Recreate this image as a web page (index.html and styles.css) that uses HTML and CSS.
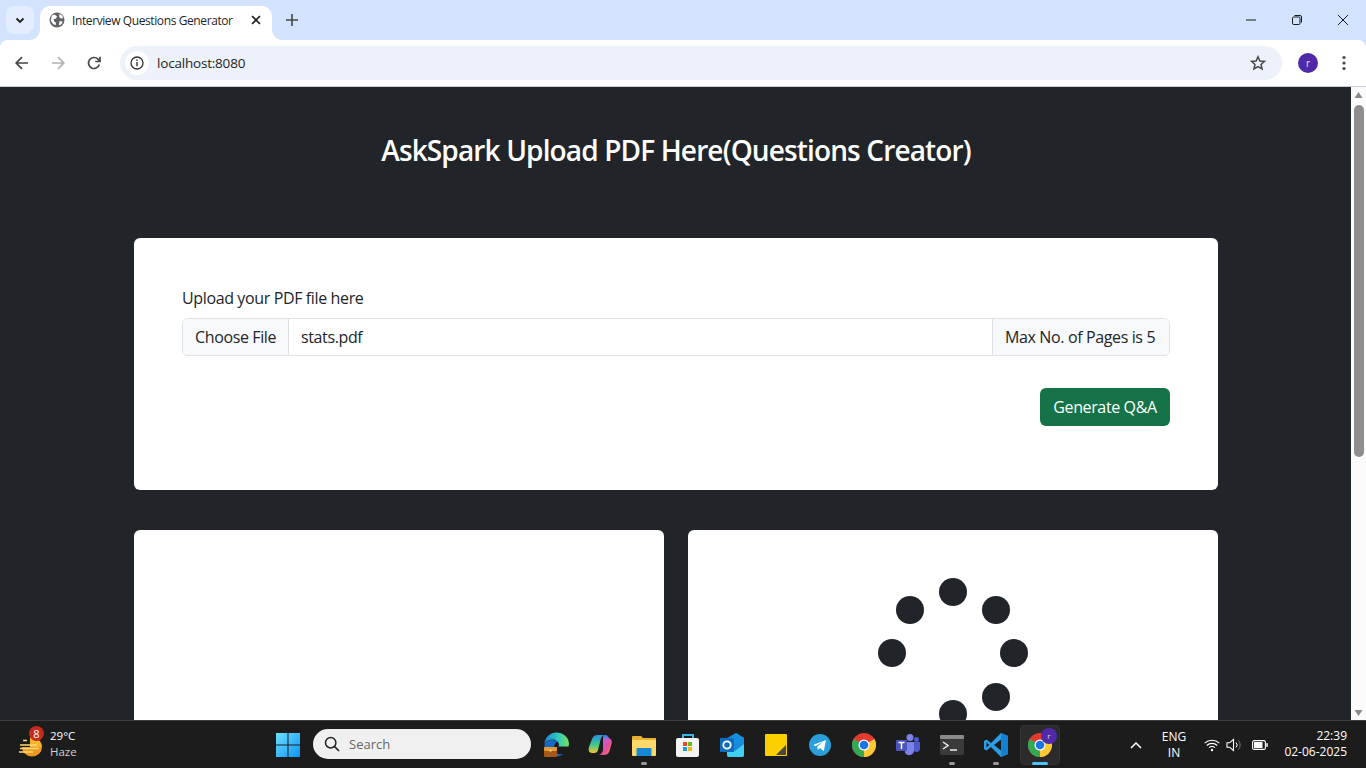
FILE: index.html
```html
<!DOCTYPE html>
<html lang="en">
<head>
<meta charset="utf-8">
<title>Interview Questions Generator</title>
<link rel="stylesheet" href="styles.css">
</head>
<body>
<div class="screen">
  <div class="window">
    <div class="tabstrip">
      <div class="tab-search"><svg width="12" height="12" viewBox="0 0 12 12"><path d="M2.500 4.500 6 8l3.500-3.500" fill="none" stroke="#1f1f1f" stroke-width="1.800"/></svg></div>
      <div class="tab">
        <svg class="tab-favicon" width="16" height="16" viewBox="0 0 16 16"><circle cx="8" cy="8" r="7.500" fill="#5f6368"/><path d="M2.800 3.400 5.500 2.600 8 4.300 7 6.500l-2.300.6.500 2.400 1.800 1.300-.4 2.500C4.300 12.500 2.200 10.500 1.800 8zM10.500 1.800l2.800 2 .9 2.500-2.300.3-1.700-1.700zM10.500 9.200l3.300.2-1.500 2.800-2.400 1.400z" fill="#fff"/></svg>
        <span class="tab-title">Interview Questions Generator</span>
        <svg class="tab-close" width="10" height="10" viewBox="0 0 10 10"><path d="M1 1l8 8M9 1l-8 8" stroke="#1f1f1f" stroke-width="1.700"/></svg>
      </div>
      <svg class="new-tab" width="12" height="12" viewBox="0 0 12 12"><path d="M6 0v12M0 6h12" stroke="#444" stroke-width="1.600"/></svg>
      <div class="win-controls">
        <svg width="10" height="10" viewBox="0 0 10 10"><path d="M0 5h10" stroke="#1a1a1a"/></svg>
        <svg width="10" height="10" viewBox="0 0 10 10"><rect x=".5" y="2" width="7.500" height="7.500" rx="1.200" fill="none" stroke="#1a1a1a"/><path d="M2.500 .5h5.500a1.500 1.500 0 0 1 1.500 1.500v5.500" fill="none" stroke="#1a1a1a"/></svg>
        <svg width="10" height="10" viewBox="0 0 10 10"><path d="M0 0l10 10M10 0L0 10" stroke="#1a1a1a"/></svg>
      </div>
    </div>
    <div class="toolbar">
      <svg class="nav" width="16" height="16" viewBox="0 0 16 16"><path d="M14 8H2.500M8 2.200 2.200 8 8 13.800" fill="none" stroke="#474747" stroke-width="1.700"/></svg>
      <svg class="nav" width="16" height="16" viewBox="0 0 16 16"><path d="M2 8h11.500M8 2.200 13.800 8 8 13.800" fill="none" stroke="#b0b1b3" stroke-width="1.700"/></svg>
      <svg class="nav" width="16" height="16" viewBox="0 0 16 16"><path d="M13.300 9.500A5.500 5.500 0 1 1 12 4.200L14 6.200M14 1.800v4.700H9.300" fill="none" stroke="#474747" stroke-width="1.700"/></svg>
      <div class="omnibox">
        <div class="site-info"><svg width="14" height="14" viewBox="0 0 14 14"><circle cx="7" cy="7" r="6" fill="none" stroke="#333" stroke-width="1.300"/><path d="M7 6v4.200M7 3.500v1.400" stroke="#333" stroke-width="1.400"/></svg></div>
        <span class="url">localhost:8080</span>
        <svg class="star" width="16" height="16" viewBox="0 0 16 16"><path d="M8 1.700l1.900 4.300 4.600.4-3.500 3 1.100 4.600L8 11.600 3.900 14l1.100-4.600-3.500-3 4.600-.4z" fill="none" stroke="#474747" stroke-width="1.500"/></svg>
      </div>
      <div class="avatar">r</div>
      <svg class="menu" width="4" height="16" viewBox="0 0 4 16"><circle cx="2" cy="2.500" r="1.600" fill="#474747"/><circle cx="2" cy="8" r="1.600" fill="#474747"/><circle cx="2" cy="13.500" r="1.600" fill="#474747"/></svg>
    </div>
    <div class="viewport">
      <main class="page">
        <h1 class="title">AskSpark Upload PDF Here(Questions Creator)</h1>
        <section class="card upload">
          <label class="label">Upload your PDF file here</label>
          <div class="input-group">
            <span class="file-btn">Choose File</span>
            <span class="file-name">stats.pdf</span>
            <span class="addon">Max No. of Pages is 5</span>
          </div>
          <div class="actions"><button class="btn">Generate Q&amp;A</button></div>
        </section>
        <div class="columns">
          <section class="card pane"></section>
          <section class="card pane spinner-pane">
            <svg class="spinner" width="150" height="150" viewBox="0 0 150 150" fill="#212529">
              <circle cx="75" cy="14" r="14"/><circle cx="118" cy="32" r="14"/><circle cx="136" cy="75" r="14"/><circle cx="118" cy="119" r="14"/><circle cx="75" cy="136" r="14"/><circle cx="14" cy="75" r="14"/><circle cx="32" cy="32" r="14"/>
            </svg>
          </section>
        </div>
      </main>
      <div class="scrollbar">
        <svg width="15" height="14" viewBox="0 0 15 14"><path d="M3.500 10l4-6 4 6z" fill="#8a8a8a"/></svg>
        <div class="thumb"></div>
        <div class="track"></div>
        <svg width="15" height="14" viewBox="0 0 15 14"><path d="M3.500 4l4 6 4-6z" fill="#8a8a8a"/></svg>
      </div>
    </div>
  </div>
  <footer class="taskbar">
    <div class="weather">
      <div class="weather-icon">
        <svg width="26" height="24" viewBox="0 0 26 24"><path d="M4 14h20a10 9.500 0 0 1-10 9.500A10 9.500 0 0 1 4 14z" fill="#ef9a1f"/><path d="M12 4.500a10 10 0 0 1 12 9.500H12z" fill="#f7b52c"/><path d="M5 7.500h4M2 12h17M2 15.500h19M1 19h14" stroke="#ffd977" stroke-width="1.700"/></svg>
        <span class="badge">8</span>
      </div>
      <div class="weather-text"><span class="temp">29°C</span><span class="haze">Haze</span></div>
    </div>
    <div class="apps">
      <div class="app"><svg width="24" height="24" viewBox="0 0 24 24"><defs><linearGradient id="win" x1="0" y1="0" x2="1" y2="1"><stop offset="0" stop-color="#6fe0fc"/><stop offset="1" stop-color="#0a94f5"/></linearGradient></defs><path d="M0 0h11.500v11.500H0zM12.500 0H24v11.500H12.500zM0 12.500h11.500V24H0zM12.500 12.500H24V24H12.500z" fill="url(#win)"/></svg></div>
      <div class="search"><svg width="16" height="16" viewBox="0 0 16 16"><circle cx="6.700" cy="6.700" r="5.200" fill="none" stroke="#222" stroke-width="1.500"/><path d="M10.500 10.500 15 15" stroke="#222" stroke-width="1.700"/></svg><span>Search</span></div>
      <div class="app first-pinned"><svg width="25" height="25" viewBox="0 0 25 25"><defs><linearGradient id="edgeTop" x1="0" y1="0" x2="1" y2="0"><stop offset="0" stop-color="#1a86d8"/><stop offset=".55" stop-color="#2ec9c0"/><stop offset="1" stop-color="#7be05a"/></linearGradient></defs><path d="M12.500.5A12 12 0 0 0 .5 12c2.500-4.500 8-5 10.500-4 4 1.500 4.500 5 3.500 6.500h10c.3-.8.500-2 .500-3A12 12 0 0 0 12.500.5z" fill="url(#edgeTop)"/><path d="M.5 12c-.4 7 5 12.500 11.500 12.500 3 0 5.500-1 7.500-2.500-5 1-9.500-1-9.500-6 0-3 1.500-5.500 3.500-6.500C9.500 7 3 7.500.5 12z" fill="#1669c4"/><rect x="0" y="15" width="13" height="10" rx="1.200" fill="#a8591a"/><rect x="0" y="15" width="13" height="4" rx="1" fill="#e89a34"/><rect x="5.500" y="17.500" width="2" height="2" fill="#ffd67a"/></svg></div>
      <div class="app"><svg width="24" height="24" viewBox="0 0 24 24"><defs><linearGradient id="copA" x1="0" y1="0" x2="0" y2="1"><stop offset="0" stop-color="#2a8fe0"/><stop offset=".55" stop-color="#3ecb8a"/><stop offset="1" stop-color="#f4c430"/></linearGradient><linearGradient id="copB" x1="0" y1="0" x2="1" y2="1"><stop offset="0" stop-color="#9a6be8"/><stop offset=".6" stop-color="#e64fa0"/><stop offset="1" stop-color="#f58a3c"/></linearGradient></defs><path d="M9 2h7c-2.500 1-3 3-4 7l-2 8c-.5 2-2 3-3.500 3H4C1 20 0 17 1 14l3-8C5 3.500 7 2 9 2z" fill="url(#copA)"/><path d="M16 2h1c2 0 3 1 4 3l-6 0c0-1 0-2 1-3z" fill="#4a7ee8"/><path d="M15 5h5c3 0 4.500 3 3.500 6l-2 7c-.7 2.500-3 4-5.500 4h-5c2.500-.5 3.500-3 4-5z" fill="url(#copB)"/></svg></div>
      <div class="app with-dot"><svg width="24" height="22" viewBox="0 0 24 22"><path d="M0 3a1 1 0 0 1 1-1h8l2 2h13v17H0z" fill="#e8b130"/><path d="M0 6h24v15a1 1 0 0 1-1 1H1a1 1 0 0 1-1-1z" fill="#fcd968"/><path d="M4.500 15a1 1 0 0 1 1-1h13a1 1 0 0 1 1 1v7h-15z" fill="#1588d8"/></svg><i class="dot"></i></div>
      <div class="app"><svg width="24" height="24" viewBox="0 0 24 24"><path d="M7 6V2h10v4" fill="none" stroke="#38b6f0" stroke-width="2"/><rect y="5" width="23" height="19" rx="2" fill="#f4f4f4"/><rect x="7" y="9" width="4" height="4" fill="#ea4a2a"/><rect x="12" y="9" width="4" height="4" fill="#6cb820"/><rect x="7" y="14" width="4" height="4" fill="#1d9be0"/><rect x="12" y="14" width="4" height="4" fill="#f9b50a"/></svg></div>
      <div class="app"><svg width="24" height="24" viewBox="0 0 24 24"><path d="M7 5 16 0l8 5v17a2 2 0 0 1-2 2H9a2 2 0 0 1-2-2z" fill="#1a87d8"/><path d="M16 0l8 5v6H12V3z" fill="#1490df"/><path d="M7 13l8 5 9-7v11a2 2 0 0 1-2 2H9a2 2 0 0 1-2-2z" fill="#40d0f0"/><rect y="5" width="14" height="14" fill="#0f6cbd"/><circle cx="7" cy="12" r="3.700" fill="none" stroke="#fff" stroke-width="1.800"/></svg></div>
      <div class="app"><svg width="22" height="22" viewBox="0 0 22 22"><rect width="22" height="22" rx="1" fill="#fcd000"/><path d="M21 11v9.500a.5.5 0 0 1-.5.5H11z" fill="#484848"/></svg></div>
      <div class="app"><svg width="22" height="22" viewBox="0 0 22 22"><circle cx="11" cy="11" r="11" fill="#2a9fd9"/><path d="M4 11l13-5-2.200 11-4-3-2 2-.5-3.500 6-5-7.500 4.500z" fill="#fff"/></svg></div>
      <div class="app"><svg width="24" height="24" viewBox="0 0 24 24"><circle cx="12" cy="12" r="12" fill="#e33b2e"/><path d="M12 12 22.400 6A12 12 0 0 1 12 24z" fill="#fcc934"/><path d="M12 12 12 24A12 12 0 0 1 1.600 6z" fill="#34a853"/><circle cx="12" cy="12" r="5.500" fill="#fff"/><circle cx="12" cy="12" r="4.300" fill="#1a73e8"/></svg></div>
      <div class="app"><svg width="24" height="22" viewBox="0 0 24 22"><circle cx="14" cy="3.500" r="3.500" fill="#7b83eb"/><circle cx="20.500" cy="5.500" r="2.500" fill="#5059c9"/><path d="M9 8h9v9a5 5 0 0 1-9 2z" fill="#7b83eb"/><path d="M18 8h6v7a3.500 3.500 0 0 1-6 2z" fill="#5059c9"/><rect y="6" width="11" height="11" rx="1" fill="#4b53bc"/><path d="M2.500 8.500h6M5.500 8.500v6.500" stroke="#fff" stroke-width="1.500"/></svg></div>
      <div class="app with-dot"><svg width="24" height="20" viewBox="0 0 24 20"><rect width="24" height="20" rx="2" fill="#3a3a3a"/><rect width="24" height="4" rx="1" fill="#8a8a8a"/><path d="M3 7l5 3.500-5 3.500" fill="none" stroke="#eee" stroke-width="1.500"/><path d="M10 15h7" stroke="#eee" stroke-width="1.500"/></svg><i class="dot"></i></div>
      <div class="app with-dot"><svg width="24" height="24" viewBox="0 0 24 24"><path d="M17 0 24 3v18l-7 3L7 14l-4.500 3.500L0 16V8l2.500-1.500L7 10z" fill="#2a9fe8"/><path d="M17 6.500 10 12l7 5.500z" fill="#1c1c1c"/><path d="M17 0l7 3v18l-7 3z" fill="#1481d0"/><path d="M2.500 9.500v5L5.300 12z" fill="#1c1c1c"/></svg><i class="dot"></i></div>
      <div class="app active"><span class="active-tile"><svg width="24" height="24" viewBox="0 0 24 24"><circle cx="12" cy="12" r="12" fill="#e33b2e"/><path d="M12 12 22.400 6A12 12 0 0 1 12 24z" fill="#fcc934"/><path d="M12 12 12 24A12 12 0 0 1 1.600 6z" fill="#34a853"/><circle cx="12" cy="12" r="5.500" fill="#fff"/><circle cx="12" cy="12" r="4.300" fill="#1a73e8"/></svg><b class="mini-avatar">r</b></span><i class="dash"></i></div>
    </div>
    <div class="tray">
      <svg class="caret" width="12" height="8" viewBox="0 0 12 8"><path d="M1 7l5-5 5 5" fill="none" stroke="#fff" stroke-width="1.500"/></svg>
      <div class="lang"><span>ENG</span><span>IN</span></div>
      <div class="status">
        <svg width="16" height="14" viewBox="0 0 16 14"><path d="M.7 5.200a10.500 10.500 0 0 1 14.600 0M2.800 7.500a7.500 7.500 0 0 1 10.400 0M5 9.700a4.400 4.400 0 0 1 6 0" fill="none" stroke="#fff" stroke-width="1.100"/><circle cx="8" cy="12" r="1.200" fill="#fff"/></svg>
        <svg width="16" height="14" viewBox="0 0 16 14"><path d="M1 4.800h2.500L7.500 1.500v11L3.500 9.200H1z" fill="none" stroke="#fff" stroke-width="1.100"/><path d="M10 4.500a3.500 3.500 0 0 1 0 5" fill="none" stroke="#fff"/><path d="M12.500 2.500a7 7 0 0 1 0 9" fill="none" stroke="#777"/></svg>
        <svg width="16" height="10" viewBox="0 0 16 10"><rect x=".6" y=".6" width="12.800" height="8.800" rx="1.500" fill="none" stroke="#fff" stroke-width="1.100"/><rect x="2" y="2" width="8.500" height="6" fill="#fff"/><rect x="14.300" y="3.200" width="1.500" height="3.600" fill="#fff"/></svg>
      </div>
      <div class="clock"><span>22:39</span><span>02-06-2025</span></div>
    </div>
  </footer>
</div>
</body>
</html>
```
FILE: styles.css
```css
* { box-sizing: border-box; }
html, body { margin: 0; padding: 0; overflow: hidden; }
body { font-family: "Open Sans", "Noto Sans", "Liberation Sans", sans-serif; }
.screen { width: 1366px; height: 768px; display: flex; flex-direction: column; overflow: hidden; }
.window { flex: 1; min-height: 0; display: flex; flex-direction: column; background: #d3e3fd; }

.tabstrip { height: 40px; background: #d3e3fd; display: flex; align-items: flex-end; padding-left: 6px; flex: none; }
.tab-search { width: 28px; height: 28px; margin-bottom: 6px; border-radius: 8px; background: #e3edfd; display: flex; align-items: center; justify-content: center; }
.tab { width: 232px; height: 34px; margin-left: 6px; background: #fff; border-radius: 10px 10px 0 0; display: flex; align-items: center; padding: 0 11px 6px 9px; position: relative; }
.tab::before, .tab::after { content: ""; position: absolute; bottom: 0; width: 10px; height: 10px; background: radial-gradient(circle at 0 0, #d3e3fd 9.500px, #fff 10px); }
.tab::before { left: -10px; transform: scaleX(1); }
.tab::after { right: -10px; background: radial-gradient(circle at 100% 0, #d3e3fd 9.500px, #fff 10px); }
.tab-favicon { flex: none; }
.tab-title { margin-left: 7px; flex: 1; font-size: 12px; color: #1f1f1f; letter-spacing: -.4px; white-space: nowrap; }
.tab-close { flex: none; }
.new-tab { margin: 0 0 14px 14px; }
.win-controls { margin-left: auto; align-self: stretch; display: flex; align-items: center; }
.win-controls svg { width: 46px; height: 10px; margin-bottom: 1px; }

.toolbar { height: 47px; background: #fff; display: flex; align-items: center; padding: 0 0 0 14px; flex: none; border-bottom: 1px solid #c9ced6; border-radius: 8px 8px 0 0; }
.nav { flex: none; margin-right: 20px; }
.omnibox { height: 34px; width: 1162px; margin-left: -2px; background: #edf2fa; border-radius: 17px; display: flex; align-items: center; padding: 0 16px 0 5px; flex: none; }
.site-info { width: 24px; height: 24px; border-radius: 50%; background: #fff; display: flex; align-items: center; justify-content: center; }
.url { margin-left: 8px; font-size: 13.500px; color: #1f1f1f; letter-spacing: -.2px; flex: 1; }
.avatar { width: 20px; height: 20px; margin-left: 16px; border-radius: 50%; background: #5029a8; color: #e8e0ff; font-size: 10px; display: flex; align-items: center; justify-content: center; flex: none; }
.menu { margin-left: 24px; flex: none; }

.viewport { flex: 1; min-height: 0; display: flex; background: #212529; overflow: hidden; }
.page { flex: 1; min-width: 0; padding: 0 133px 0 134px; height: 100%; overflow: hidden; }
.title { margin: 0; padding-top: 42px; height: 151px; font-size: 28px; line-height: 42px; font-weight: 600; color: #fff; text-align: center; letter-spacing: -.86px; }

.card { background: #fff; border-radius: 6px; }
.upload { height: 252px; padding: 48px; color: #212529; font-size: 16px; }
.label { display: block; height: 32px; line-height: 24px; letter-spacing: -.37px; }
.input-group { display: flex; height: 38px; border: 1px solid #dee2e6; border-radius: 6px; line-height: 36px; letter-spacing: -.37px; }
.file-btn { width: 106px; padding-left: 12px; background: #f8f9fa; border-right: 1px solid #dee2e6; border-radius: 5px 0 0 5px; }
.file-name { flex: 1; padding-left: 12px; }
.addon { width: 177px; padding-left: 12px; background: #f8f9fa; border-left: 1px solid #dee2e6; border-radius: 0 5px 5px 0; white-space: nowrap; }
.actions { display: flex; justify-content: flex-end; margin-top: 32px; }
.btn { width: 130px; height: 38px; border: 0; border-radius: 6px; background: #157347; color: #fff; font: inherit; letter-spacing: -.37px; padding: 0; }

.columns { display: grid; grid-template-columns: 1fr 1fr; gap: 24px; margin-top: 40px; }
.pane { height: 400px; }
.spinner-pane { display: flex; justify-content: center; padding-top: 48px; }
.spinner { flex: none; }

.scrollbar { width: 15px; flex: none; background: #fbfbfb; display: flex; flex-direction: column; align-items: center; }
.scrollbar svg { flex: none; margin-top: 1px; }
.thumb { width: 10px; height: 352px; margin-top: 3px; background: #8e8e8e; border-radius: 5px; flex: none; }
.track { flex: 1; }

.taskbar { height: 48px; flex: none; background: #1c1c1c; border-top: 1px solid #3b3b3b; display: flex; align-items: center; color: #fff; position: relative; }
.weather { width: 266px; display: flex; align-items: center; padding-left: 18px; flex: none; }
.weather-icon { position: relative; width: 26px; height: 24px; }
.badge { position: absolute; left: 11px; top: -7px; width: 15px; height: 15px; border-radius: 50%; background: #c42b1c; font-size: 11px; line-height: 15px; text-align: center; color: #fff; }
.weather-text { display: flex; flex-direction: column; margin: 0 0 1px 6px; font-size: 11.500px; line-height: 16px; }
.haze { color: #d0d0d0; }
.apps { display: flex; align-items: center; height: 100%; }
.app { width: 44px; height: 40px; display: flex; align-items: center; justify-content: center; position: relative; flex: none; }
.search { width: 218px; height: 30px; margin: 0 3px 1px; background: #f0f0f0; border-radius: 15px; display: flex; align-items: center; padding-left: 11px; gap: 9px; color: #666; font-size: 13px; flex: none; }
.dot { position: absolute; left: 19px; bottom: 0; width: 6px; height: 3px; border-radius: 2px; background: #9a9a9a; }
.active-tile { width: 40px; height: 40px; border-radius: 4px; background: #2b2b2b; border: 1px solid #333; display: flex; align-items: center; justify-content: center; position: relative; }
.mini-avatar { position: absolute; right: 2px; top: 2px; width: 16px; height: 16px; border-radius: 50%; background: #5029a8; font-size: 8px; font-weight: 400; line-height: 16px; text-align: center; color: #ddd; }
.dash { position: absolute; left: 14px; bottom: 0; width: 16px; height: 3px; border-radius: 2px; background: #4cc2ff; }
.tray { flex: 1; display: flex; align-items: center; padding-right: 19px; font-size: 12px; }
.caret { margin-left: 68px; flex: none; }
.lang { width: 40px; margin-left: 12px; display: flex; flex-direction: column; align-items: center; line-height: 16px; }
.status { display: flex; align-items: center; gap: 6px; margin-left: 10px; }
.status svg:last-child { margin-left: 4px; }
.clock { margin-left: auto; margin-bottom: 1px; display: flex; flex-direction: column; align-items: flex-end; line-height: 16px; }
```
